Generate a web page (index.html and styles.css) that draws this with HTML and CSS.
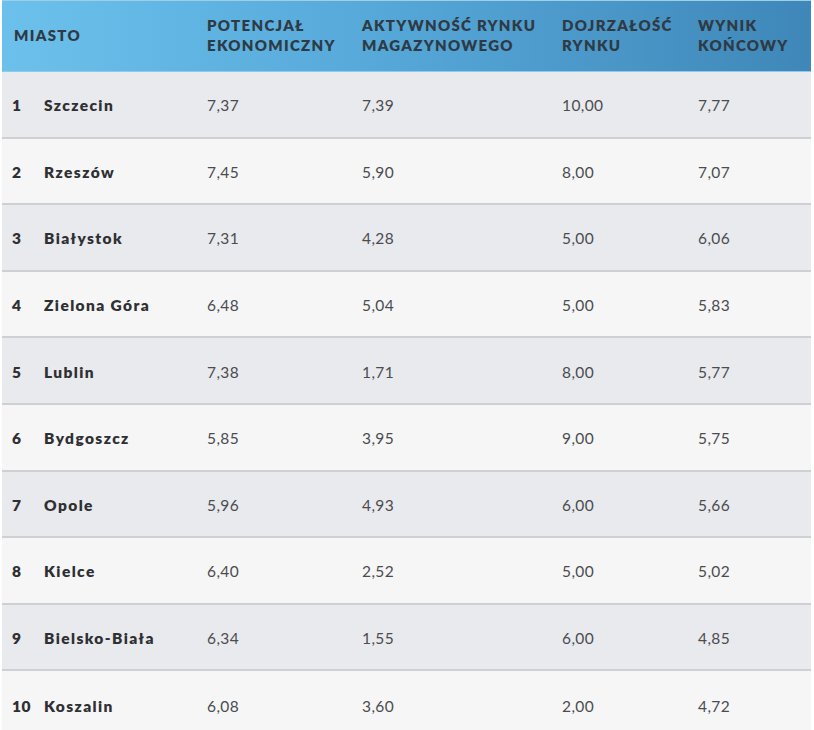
FILE: index.html
```html
<!DOCTYPE html>
<html lang="pl">
<head>
<meta charset="utf-8">
<title>Ranking miast</title>
<link rel="stylesheet" href="styles.css">
</head>
<body>
<div class="table">
  <div class="head">
    <div class="h h-city">MIASTO</div>
    <div class="h">POTENCJAŁ<br>EKONOMICZNY</div>
    <div class="h">AKTYWNOŚĆ RYNKU<br>MAGAZYNOWEGO</div>
    <div class="h">DOJRZAŁOŚĆ<br>RYNKU</div>
    <div class="h">WYNIK<br>KOŃCOWY</div>
  </div>
  <div class="row odd"><div class="c city"><span class="n">1</span>Szczecin</div><div class="c">7,37</div><div class="c">7,39</div><div class="c">10,00</div><div class="c">7,77</div></div>
  <div class="row"><div class="c city"><span class="n">2</span>Rzeszów</div><div class="c">7,45</div><div class="c">5,90</div><div class="c">8,00</div><div class="c">7,07</div></div>
  <div class="row odd"><div class="c city"><span class="n">3</span>Białystok</div><div class="c">7,31</div><div class="c">4,28</div><div class="c">5,00</div><div class="c">6,06</div></div>
  <div class="row"><div class="c city"><span class="n">4</span>Zielona Góra</div><div class="c">6,48</div><div class="c">5,04</div><div class="c">5,00</div><div class="c">5,83</div></div>
  <div class="row odd"><div class="c city"><span class="n">5</span>Lublin</div><div class="c">7,38</div><div class="c">1,71</div><div class="c">8,00</div><div class="c">5,77</div></div>
  <div class="row"><div class="c city"><span class="n">6</span>Bydgoszcz</div><div class="c">5,85</div><div class="c">3,95</div><div class="c">9,00</div><div class="c">5,75</div></div>
  <div class="row odd"><div class="c city"><span class="n">7</span>Opole</div><div class="c">5,96</div><div class="c">4,93</div><div class="c">6,00</div><div class="c">5,66</div></div>
  <div class="row"><div class="c city"><span class="n">8</span>Kielce</div><div class="c">6,40</div><div class="c">2,52</div><div class="c">5,00</div><div class="c">5,02</div></div>
  <div class="row odd"><div class="c city"><span class="n">9</span>Bielsko-Biała</div><div class="c">6,34</div><div class="c">1,55</div><div class="c">6,00</div><div class="c">4,85</div></div>
  <div class="row last"><div class="c city"><span class="n">10</span>Koszalin</div><div class="c">6,08</div><div class="c">3,60</div><div class="c">2,00</div><div class="c">4,72</div></div>
</div>
</body>
</html>
```

FILE: styles.css
```css
html, body {
  margin: 0;
  padding: 0;
  background: #ffffff;
}
body {
  font-family: "Lato", "Open Sans", sans-serif;
  color: #3b3d40;
  width: 814px;
  height: 730px;
  overflow: hidden;
}
.table {
  margin-left: 2px;
  width: 809px;
}
.head, .row {
  display: grid;
  grid-template-columns: 205px 155px 200px 136px 113px;
}
.head {
  height: 72px;
  box-sizing: border-box;
  padding-bottom: 2px;
  border-top: 1px solid #9fcfe6;
  border-bottom: 1px solid #8fcbe8;
  background: linear-gradient(90deg, #6cc1ec 0%, #56a9d9 45%, #3f87b9 100%);
  align-items: center;
}
.h {
  font-weight: 800;
  font-size: 15px;
  line-height: 20px;
  letter-spacing: 1.3px;
  color: #2f3a44;
}
.h-city {
  padding-left: 12px;
}
.row {
  height: 66.6px;
  box-sizing: border-box;
  border-bottom: 2px solid #cfd0d3;
  background: #f6f6f6;
  align-items: center;
}
.row.odd {
  background: #e9eaed;
}
.row.last {
  border-bottom: none;
}
.c {
  font-size: 15.5px;
  color: #4a4c50;
  letter-spacing: 0.4px;
  padding-top: 2px;
}
.city {
  font-weight: 800;
  color: #2f3033;
  padding-left: 10px;
  display: flex;
  letter-spacing: 1.4px;
}
.n {
  width: 32px;
  font-weight: 800;
  letter-spacing: 0.5px;
}
```
